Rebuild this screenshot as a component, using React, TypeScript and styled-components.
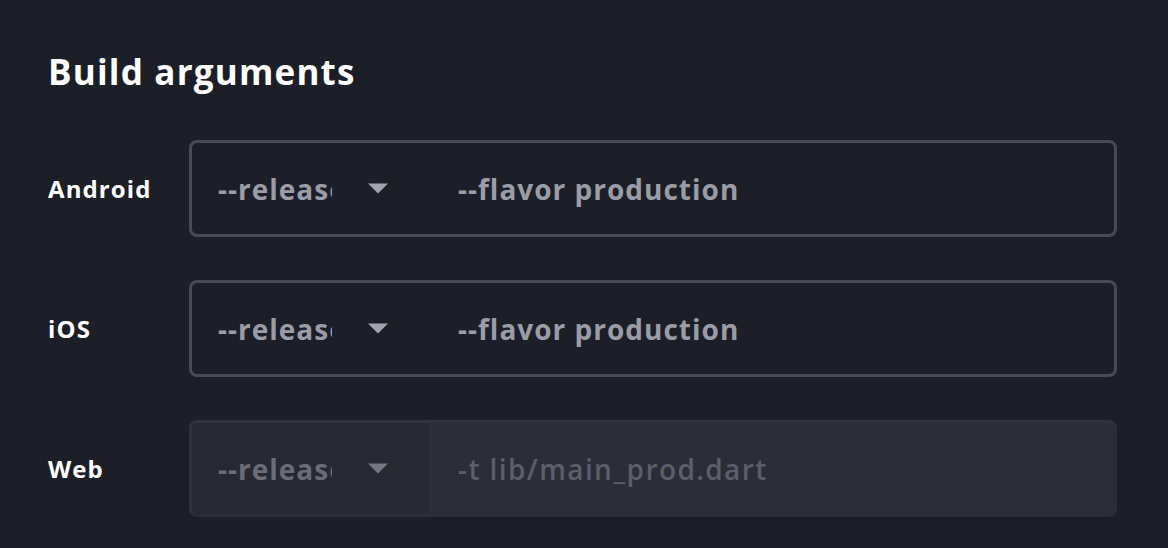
import React from "react";
import styled, { createGlobalStyle, css } from "styled-components";

const GlobalStyle = createGlobalStyle`
  html, body {
    margin: 0;
    padding: 0;
    background: #1c1f27;
  }
  body {
    font-family: "Open Sans", "Lato", sans-serif;
    -webkit-font-smoothing: antialiased;
  }
`;

type Row = {
  label: string;
  mode: string;
  args: string;
  disabled?: boolean;
};

const rows: Row[] = [
  { label: "Android", mode: "--release", args: "--flavor production" },
  { label: "iOS", mode: "--release", args: "--flavor production" },
  { label: "Web", mode: "--release", args: "-t lib/main_prod.dart", disabled: true },
];

const Caret = () => (
  <svg width="20" height="11" viewBox="0 0 20 11">
    <path d="M0 0.5 L20 0.5 L10 10.5 Z" fill="currentColor" />
  </svg>
);

const App: React.FC = () => {
  return (
    <Page>
      <GlobalStyle />
      <Title>Build arguments</Title>
      <Rows>
        {rows.map((r) => (
          <FieldRow key={r.label}>
            <Label>{r.label}</Label>
            <Field $disabled={r.disabled}>
              <ModeSelect $disabled={r.disabled}>
                <ModeText>{r.mode}</ModeText>
                <CaretWrap $disabled={r.disabled}>
                  <Caret />
                </CaretWrap>
              </ModeSelect>
              <ArgsInput $disabled={r.disabled}>{r.args}</ArgsInput>
            </Field>
          </FieldRow>
        ))}
      </Rows>
    </Page>
  );
};

export default App;

const Page = styled.div`
  width: 1168px;
  height: 548px;
  box-sizing: border-box;
  padding: 48px 51px 0 48px;
  background: #1c1f27;
  color: #ffffff;
`;

const Title = styled.h2`
  margin: 0 0 44px;
  font-size: 35px;
  line-height: 48px;
  font-weight: 700;
  letter-spacing: 1.2px;
`;

const Rows = styled.div`
  display: flex;
  flex-direction: column;
  gap: 43px;
`;

const FieldRow = styled.div`
  display: grid;
  grid-template-columns: 141px 1fr;
  align-items: center;
`;

const Label = styled.div`
  font-size: 24px;
  font-weight: 700;
  letter-spacing: 1.1px;
`;

const Field = styled.div<{ $disabled?: boolean }>`
  height: 97px;
  box-sizing: border-box;
  display: flex;
  border-radius: 8px;
  overflow: hidden;
  ${({ $disabled }) =>
    $disabled
      ? css`
          background: #2b2e37;
          border: 3px solid #30333d;
          border-right-color: #2b2e37;
          border-bottom-color: #2b2e37;
        `
      : css`
          background: #1c1f27;
          border: 3px solid #484a57;
        `}
`;

const ModeSelect = styled.div<{ $disabled?: boolean }>`
  width: 237px;
  flex-shrink: 0;
  display: flex;
  align-items: center;
  padding-left: 26px;
  box-sizing: border-box;
  background: ${({ $disabled }) => ($disabled ? "#262932" : "transparent")};
  color: ${({ $disabled }) => ($disabled ? "#6a6d77" : "#9a9ca6")};
`;

const ModeText = styled.span`
  width: 114px;
  overflow: hidden;
  white-space: nowrap;
  font-size: 28px;
  font-weight: 700;
  letter-spacing: 1px;
`;

const CaretWrap = styled.span<{ $disabled?: boolean }>`
  display: flex;
  margin-left: 36px;
  color: ${({ $disabled }) => ($disabled ? "#75777f" : "#a3a4aa")};
`;

const ArgsInput = styled.div<{ $disabled?: boolean }>`
  flex: 1;
  display: flex;
  align-items: center;
  padding-left: 29px;
  font-size: 28px;
  font-weight: ${({ $disabled }) => ($disabled ? 600 : 700)};
  letter-spacing: ${({ $disabled }) => ($disabled ? "1.4px" : "1px")};
  white-space: nowrap;
  color: ${({ $disabled }) => ($disabled ? "#5c5f69" : "#9a9ca6")};
`;
